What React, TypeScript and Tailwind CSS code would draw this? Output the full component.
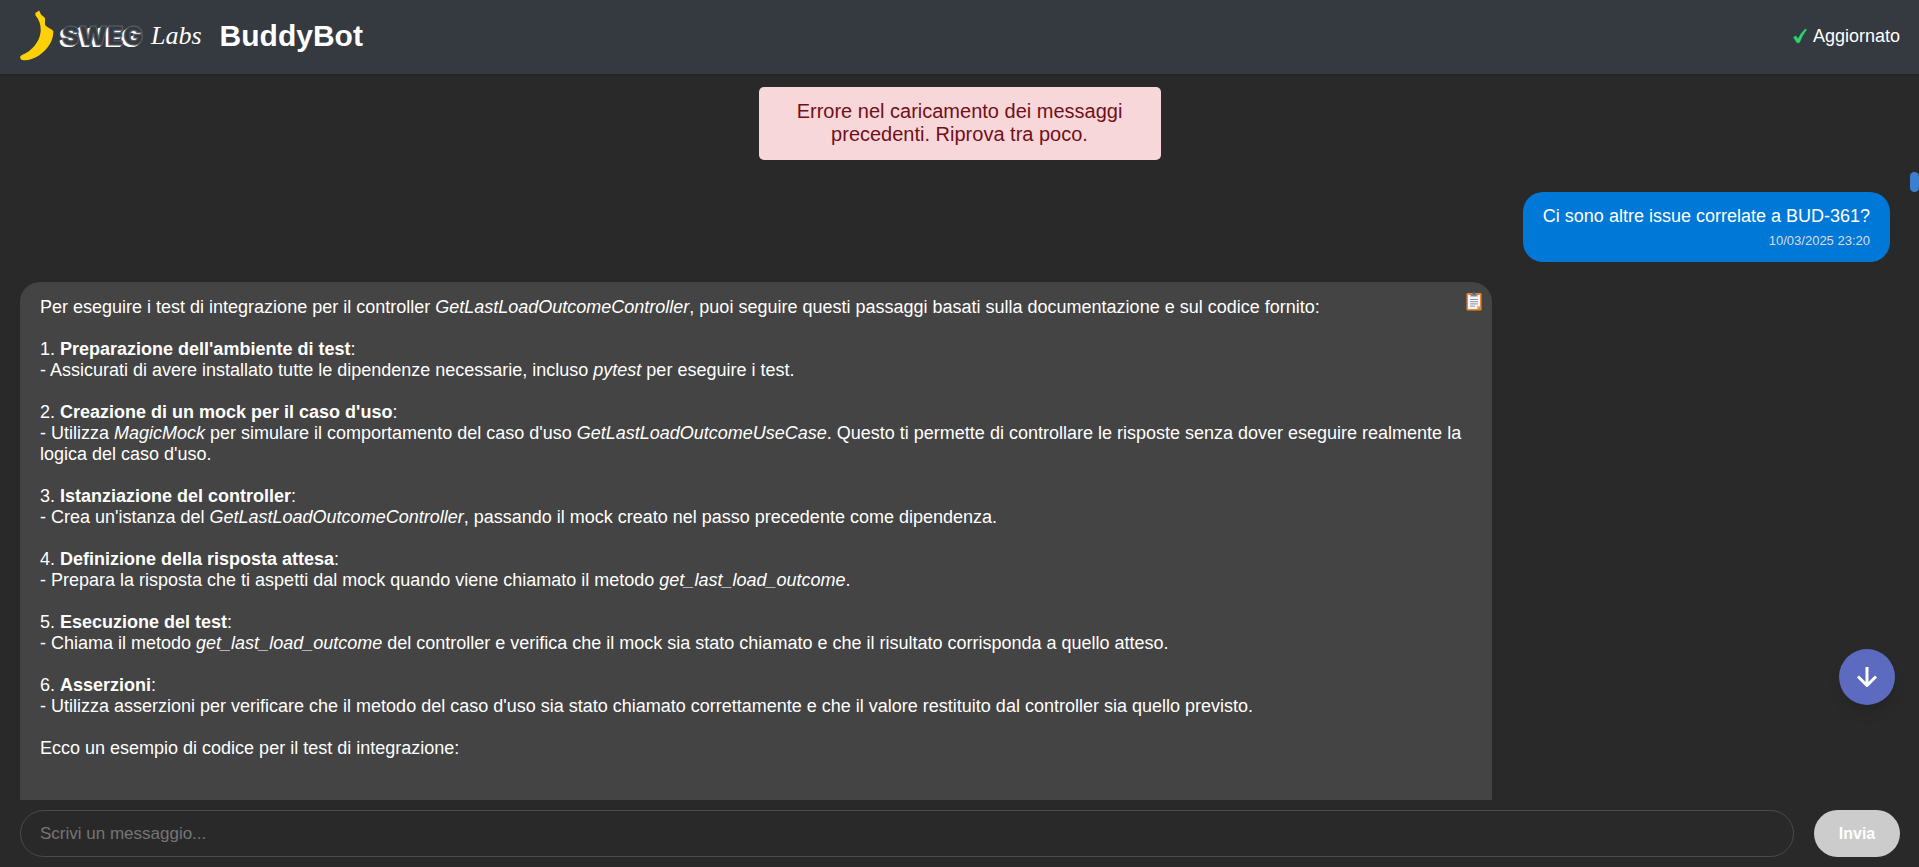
import React from "react";

type Step = { title: string; body: React.ReactNode };

const steps: Step[] = [
  {
    title: "Preparazione dell'ambiente di test",
    body: (
      <>
        Assicurati di avere installato tutte le dipendenze necessarie, incluso <em>pytest</em> per eseguire i test.
      </>
    ),
  },
  {
    title: "Creazione di un mock per il caso d'uso",
    body: (
      <>
        Utilizza <em>MagicMock</em> per simulare il comportamento del caso d'uso <em>GetLastLoadOutcomeUseCase</em>.
        Questo ti permette di controllare le risposte senza dover eseguire realmente la logica del caso d'uso.
      </>
    ),
  },
  {
    title: "Istanziazione del controller",
    body: (
      <>
        Crea un'istanza del <em>GetLastLoadOutcomeController</em>, passando il mock creato nel passo precedente come
        dipendenza.
      </>
    ),
  },
  {
    title: "Definizione della risposta attesa",
    body: (
      <>
        Prepara la risposta che ti aspetti dal mock quando viene chiamato il metodo <em>get_last_load_outcome</em>.
      </>
    ),
  },
  {
    title: "Esecuzione del test",
    body: (
      <>
        Chiama il metodo <em>get_last_load_outcome</em> del controller e verifica che il mock sia stato chiamato e che
        il risultato corrisponda a quello atteso.
      </>
    ),
  },
  {
    title: "Asserzioni",
    body: (
      <>
        Utilizza asserzioni per verificare che il metodo del caso d'uso sia stato chiamato correttamente e che il valore
        restituito dal controller sia quello previsto.
      </>
    ),
  },
];

function Logo() {
  return (
    <div className="flex items-center gap-2">
      <svg className="mb-0.5 h-[51px] w-[34px]" viewBox="0 0 34 51" aria-hidden="true">
        <path
          d="M15.3 3 L19.2 0.6 L21 4.500 L25 8 L25 14.500 C26.500 17.500 31.500 18.500 33.300 21 C33.800 30 28 39.500 19 45.500 C12 50.300 3.500 51.500 0.800 49.200 C-0.300 47 0 45.800 2 45 C12 41 19.500 32 20.600 22 C21.200 16 19.500 9.500 15.500 5.400 Z"
          fill="#fdd008"
        />
      </svg>
      <span className="font-[Inter,sans-serif] text-[26px] leading-8 font-black text-[#343a40] [-webkit-text-stroke:1px_#59616a] [text-shadow:-1px_1px_0_#fff,-2px_2px_0_#fff,-3px_2px_0_#fff]">
        SWEG
      </span>
      <span className="font-['Liberation_Serif',serif] text-[26px] leading-8 text-white italic">Labs</span>
    </div>
  );
}

function ClipboardIcon() {
  return (
    <svg className="h-[19px] w-4" viewBox="0 0 16 19" aria-hidden="true">
      <rect x="0.5" y="1" width="15" height="17.5" rx="1.2" fill="#e8892b" />
      <path d="M2 3h12v11l-3 3h-9z" fill="#f7f5fb" />
      <path d="M14 14h-3v3z" fill="#c9b8b8" />
      <rect x="4.500" y="1.500" width="7" height="3" rx="0.600" fill="#7d8791" />
      <rect x="6.500" y="0" width="3" height="2.500" rx="1" fill="#56616b" />
      <path d="M4 7.500h8M4 9.700h8M4 11.900h8M4 14.100h5" stroke="#8b8894" strokeWidth="0.900" />
    </svg>
  );
}

export default function App() {
  return (
    <div className="flex h-screen flex-col bg-[#292929] font-['Liberation_Sans',Arial,sans-serif] text-white">
      <header className="flex h-[74px] shrink-0 items-center justify-between bg-[#343a40] pr-[19px] pb-0.5 pl-5 shadow-sm">
        <div className="flex items-center gap-[18px]">
          <Logo />
          <h1 className="text-3xl font-bold">BuddyBot</h1>
        </div>
        <p className="flex items-center gap-1.5 text-lg">
          <svg className="h-4 w-3.5" viewBox="0 0 14 16" aria-hidden="true">
            <path d="M0.500 9.200 L3 8 L5 11 Q7.500 5.500 12.300 1 L13.600 1.600 Q9 7.500 6.500 14.600 L4 14.800 Z" fill="#2bd673" stroke="#2bd673" strokeWidth="0.500" />
          </svg>
          Aggiornato
        </p>
      </header>

      <main className="relative flex min-h-0 flex-1 flex-col overflow-hidden pr-[29px] pl-5">
        <div
          role="alert"
          className="mt-[13px] ml-[9px] w-[402px] self-center rounded-[5px] bg-[#f8d7da] px-5 pt-[13px] pb-3.5 text-center text-xl leading-[23px] text-[#701019]"
        >
          Errore nel caricamento dei messaggi precedenti. Riprova tra poco.
        </div>

        <article className="mt-8 self-end rounded-[20px] bg-[#0078d7] px-5 py-3.5">
          <p className="text-lg leading-[21px]">Ci sono altre issue correlate a BUD-361?</p>
          <time className="mt-1.5 block text-right text-[13px] leading-[15px] text-[#dcdcdc]">10/03/2025 23:20</time>
        </article>

        <article className="relative mt-5 w-[78.7%] flex-1 rounded-t-[20px] bg-[#444] px-5 pt-[15px] text-lg leading-[21px]">
          <button type="button" aria-label="Copia messaggio" className="absolute top-2.5 right-2.5">
            <ClipboardIcon />
          </button>
          <p>
            Per eseguire i test di integrazione per il controller <em>GetLastLoadOutcomeController</em>, puoi seguire
            questi passaggi basati sulla documentazione e sul codice fornito:
          </p>
          {steps.map((step, i) => (
            <div key={step.title} className="mt-[21px]">
              <p>
                {i + 1}. <strong>{step.title}</strong>:
              </p>
              <p>- {step.body}</p>
            </div>
          ))}
          <p className="mt-[21px]">Ecco un esempio di codice per il test di integrazione:</p>
        </article>

        <div className="absolute top-[98px] right-0 h-5 w-[9px] rounded-[5px] bg-[#3b80d0]" />
        <button
          type="button"
          aria-label="Vai in fondo"
          className="absolute right-6 bottom-[95px] flex size-14 items-center justify-center rounded-full bg-[#5c6bc0] shadow-lg"
        >
          <svg className="size-5" viewBox="0 0 20 20" fill="none" stroke="#fff" strokeWidth="3" aria-hidden="true">
            <path d="M10 0v18M1 9.500l9 9 9-9" />
          </svg>
        </button>
      </main>

      <form className="flex shrink-0 gap-5 pt-2.5 pr-[19px] pb-2.5 pl-5" onSubmit={(e) => e.preventDefault()}>
        <input
          type="text"
          aria-label="Scrivi un messaggio"
          placeholder="Scrivi un messaggio..."
          className="h-[47px] min-w-0 flex-1 rounded-full border border-[#4a4a4a] px-[19px] text-[17px] outline-none placeholder:text-[#757575]"
        />
        <button type="submit" className="w-[86px] rounded-full bg-[#ccc] text-base font-bold text-white">
          Invia
        </button>
      </form>
    </div>
  );
}
